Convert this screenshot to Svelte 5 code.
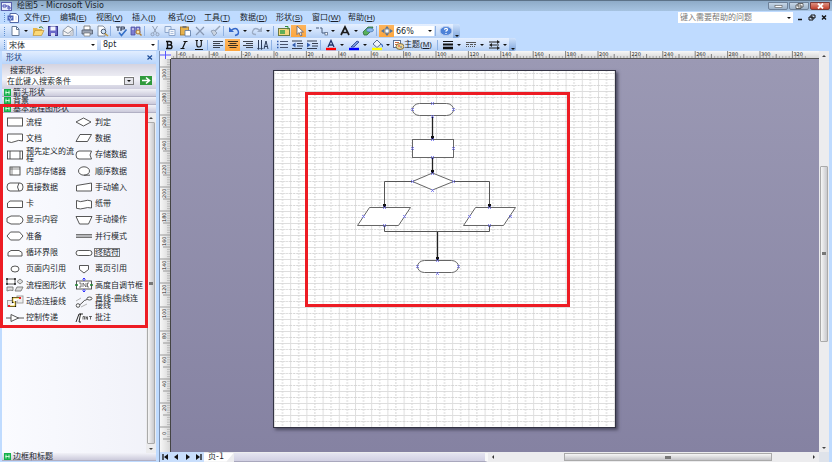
<script lang="ts">
  type Tool = { kind: 'icon' | 'caret' | 'sep'; name?: string; label?: string; active?: boolean };

  const menus = [
    ['文件', 'F'], ['编辑', 'E'], ['视图', 'V'], ['插入', 'I'], ['格式', 'O'],
    ['工具', 'T'], ['数据', 'D'], ['形状', 'S'], ['窗口', 'W'], ['帮助', 'H']
  ];

  // icons are drawn on a 14 x 12 grid
  const icons: Record<string, string> = {
    new: '<path d="M4 1.500h4.500l2.500 2.500v6.500h-7z" fill="#fff" stroke="#667a96"/><path d="M8.500 1.500v3h2.500" fill="none" stroke="#667a96"/>',
    open: '<path d="M2 3h4l1 1h4v6H2z" fill="#e8b84a"/><path d="M4 5.500h9l-2.500 5H2z" fill="#fbd978" stroke="#b98a2c" stroke-width=".6"/><path d="M8 2.500q3-2 4 1" stroke="#3a7a3a" fill="none"/>',
    save: '<rect x="2.500" y="1.500" width="9" height="9" fill="#6a68c8" stroke="#3b3a8e"/><rect x="4.500" y="1.500" width="5" height="4" fill="#f3f5ff"/><rect x="5" y="8" width="4" height="3" fill="#d8dcf0"/>',
    mail: '<path d="M2 5.500 7 1l5 3v6.500H2z" fill="#f4f4f4" stroke="#7b8695" stroke-width=".8"/><path d="M2 5.500l5 3 5-4" fill="none" stroke="#7b8695" stroke-width=".8"/><circle cx="10.500" cy="9" r="2" fill="#c9cdd6"/>',
    print: '<path d="M4 1h6v4H4z" fill="#fff" stroke="#666" stroke-width=".8"/><path d="M2 5h10.500v4H2z" fill="#9ba3b2" stroke="#505a6c" stroke-width=".8"/><path d="M4 8h6v3H4z" fill="#fff" stroke="#666" stroke-width=".6"/>',
    preview: '<path d="M3 1h5l2 2v8H3z" fill="#fff" stroke="#6b7688" stroke-width=".8"/><circle cx="8.500" cy="6.500" r="2.300" fill="#cfe4f7" stroke="#4a5870"/><path d="M10 8.500l3 2.500" stroke="#c59a3a" stroke-width="1.500"/>',
    spell: '<path d="M2 2h4M4 2v4M7 6V2h3q1 1 0 2H7" fill="none" stroke="#333d55" stroke-width="1.200"/><path d="M5 7.500l2.500 3 5-6" fill="none" stroke="#3470c8" stroke-width="1.600"/>',
    research: '<path d="M2 2h4v8H2zM7 2h4v6H7z" fill="#7e7fd0" stroke="#43459c" stroke-width=".7"/><path d="M3 4h2M8 4h2" stroke="#fff"/><circle cx="9" cy="7" r="2" fill="#f5e7b2" stroke="#b37c30"/><path d="M10.500 8.500l2 2" stroke="#b37c30" stroke-width="1.400"/>',
    cut: '<path d="M4.500 1l4 7M9.500 1l-4 7" stroke="#93a1b7" fill="none"/><circle cx="4.500" cy="9.300" r="1.500" fill="none" stroke="#93a1b7"/><circle cx="9.500" cy="9.300" r="1.500" fill="none" stroke="#93a1b7"/>',
    copy: '<path d="M2 1.500h6v6H2z" fill="#e3edfa" stroke="#8da6cc"/><path d="M6 4.500h6v6H6z" fill="#f3f7fd" stroke="#8da6cc"/><path d="M7.500 6.500h3M7.500 8.500h3" stroke="#8da6cc" stroke-width=".7"/>',
    paste: '<rect x="2.500" y="2" width="8" height="8" fill="#e7b24c" stroke="#9c6f22" stroke-width=".8"/><rect x="4.500" y="1" width="4" height="2" fill="#777"/><path d="M7 5.500h5.500v5.500H7z" fill="#fff" stroke="#5878a8" stroke-width=".8"/>',
    del: '<path d="M3 2l8 8M11 2l-8 8" stroke="#8898b2" stroke-width="1.200"/>',
    brush: '<path d="M12 1L7 6" stroke="#9aa7ba" stroke-width="1.500"/><path d="M3 6l3-1 3 3-3 3z" fill="#c9d3e0" stroke="#8796ad" stroke-width=".8"/>',
    undo: '<path d="M4 5.500q5-4 7 0t-3 5" fill="none" stroke="#3466c8" stroke-width="1.500"/><path d="M2 2v5h5z" fill="#3466c8"/>',
    redo: '<path d="M10 5.500q-5-4-7 0t3 4" fill="none" stroke="#9cacc4" stroke-width="1.300"/><path d="M12 2v5H7z" fill="#9cacc4"/>',
    shapes: '<rect x="1.500" y="3.500" width="11" height="7" fill="#f4d67e" stroke="#6a7b45"/><rect x="3" y="5" width="5" height="4" fill="#5fae58"/><path d="M8 1.500h3v3" fill="none" stroke="#2f8d3a"/>',
    pointer: '<path d="M5 1v8.500l2-2 1.500 3.500 1.500-.7L8.600 7h2.800z" fill="#fff" stroke="#57607a" stroke-width=".8"/>',
    connector: '<path d="M1 3h3M5 3h2v5h3" fill="none" stroke="#4b5e7e"/><rect x="10" y="7.500" width="2.500" height="2.500" fill="#fff" stroke="#4b5e7e" stroke-width=".7"/>',
    text: '<path d="M3 10L7 2l4 8M4.500 7.500h5" fill="none" stroke="#1c1c1c" stroke-width="1.700"/>',
    ink: '<path d="M2 7l5-5h5l-3 5-3 3H3z" fill="#58b15a" stroke="#2e6b3a" stroke-width=".8"/><ellipse cx="9" cy="5" rx="3.500" ry="2" fill="#8bb7e8" stroke="#376aa7" stroke-width=".6"/>',
    pan: '<path d="M7 1l2 2.500H5zM7 11l2-2.500H5zM1 6l3-2v4zM13 6l-3-2v4z" fill="#53749c"/><rect x="5" y="4" width="4" height="4" fill="#fff" stroke="#53749c" stroke-width=".8"/>',
    help: '<ellipse cx="7" cy="6" rx="6" ry="4.500" fill="#4e82d8" stroke="#b9cdf0"/><path d="M5.500 4.800q0-1.500 1.500-1.500t1.500 1.300q0 1-1.500 1.500v.6M7 8v1" stroke="#fff" fill="none" stroke-width="1.200"/>',
    bold: '<path d="M4 2.500h3.500q2 0 2 1.700t-2 1.800H5.500h2.500q2 0 2 1.800t-2 1.700H4M5.500 2.500v7" fill="none" stroke="#111" stroke-width="1.400"/>',
    italic: '<path d="M6.500 2.500h4M3.500 9.500h4M8.500 2.500l-3 7" fill="none" stroke="#111" stroke-width="1.200"/>',
    underline: '<path d="M3.500 1.500h2.500M8 1.500h2.500M4.800 1.500v4.500q0 2 2.200 2t2.300-2V1.500M3 10.500h8" fill="none" stroke="#111" stroke-width="1.100"/>',
    left: '<path d="M2 2.500h10M2 4.500h7M2 6.500h10M2 8.500h7" stroke="#3d434e"/>',
    center: '<path d="M2 2.500h10M3.500 4.500h7M2 6.500h10M3.500 8.500h7" stroke="#3a3020"/>',
    right: '<path d="M2 2.500h10M5 4.500h7M2 6.500h10M5 8.500h7" stroke="#3d434e"/>',
    vertical: '<path d="M2.500 1v9M5.500 1v9M8 10l2-8 2 8M8.500 7.500h3" fill="none" stroke="#2d3c59"/><path d="M1 9h3l-1.500 2zM4 9h3l-1.500 2z" fill="#2d3c59"/>',
    bullets: '<path d="M5 2.500h8M5 5.500h8M5 8.500h8" stroke="#46516a"/><path d="M2 2.500h1.500M2 5.500h1.500M2 8.500h1.500" stroke="#315cae" stroke-width="1.500"/>',
    outdent: '<path d="M2 2h10M7 4.500h6M7 7h6M2 9.500h10" stroke="#333c4e"/><path d="M5.500 3.500v5L2 6z" fill="#315cae"/>',
    indent: '<path d="M2 2h10M7 4.500h6M7 7h6M2 9.500h10" stroke="#333c4e"/><path d="M2 3.500v5L5.500 6z" fill="#315cae"/>',
    fontcolor: '<path d="M4 8L7 1.500 10 8M5 6h4" fill="none" stroke="#20356b" stroke-width="1.300"/><path d="M2 10h10" stroke="#f00" stroke-width="2.400"/>',
    linecolor: '<path d="M4 8l6-6 2 1-5 5z" fill="#7a9be0" stroke="#27408c" stroke-width=".8"/><path d="M2 10h10" stroke="#00f" stroke-width="2.400"/>',
    fill: '<path d="M3 5l4-4 4 4-4 3.500z" fill="#eef3fb" stroke="#4a5c80" stroke-width=".9"/><path d="M11 5q2 1 1.500 3" fill="none" stroke="#3b70c8" stroke-width="1.200"/><path d="M2 10h10" stroke="#ff0" stroke-width="2.400"/>',
    theme: '<rect x="1.500" y="1.500" width="7" height="7" fill="#fff" stroke="#5b7096"/><path d="M3 3.500h4M3 5.500h3" stroke="#cf6b3c"/><ellipse cx="8" cy="7.500" rx="4" ry="3" fill="#ecd28e" stroke="#6c5a33" stroke-width=".8"/><circle cx="7" cy="7" r=".8" fill="#d33"/><circle cx="9" cy="8" r=".8" fill="#36b"/>',
    weight: '<path d="M2 2.500h10" stroke="#111"/><path d="M2 5.500h10" stroke="#111" stroke-width="2"/><path d="M2 9h10" stroke="#111" stroke-width="2.600"/>',
    dash: '<path d="M2 3.500h10" stroke="#555"/><path d="M2 5.500h10" stroke="#555" stroke-dasharray="3 1"/><path d="M2 7.500h10" stroke="#555" stroke-dasharray="1 1"/>',
    ends: '<path d="M2 3h8M4 6h8M2 9h8" stroke="#222"/><path d="M10 1l3 2-3 2zM5 4l-3 2 3 2zM10 7l3 2-3 2z" fill="#222"/>'
  };

  const i = (name: string, label: string, active = false): Tool => ({ kind: 'icon', name, label, active });
  const caret: Tool = { kind: 'caret' };
  const sep: Tool = { kind: 'sep' };

  const standard: Tool[] = [
    i('new', '新建'), caret, i('open', '打开'), i('save', '保存'), i('mail', '邮件'), sep,
    i('print', '打印'), i('preview', '打印预览'), sep, i('spell', '拼写检查'), i('research', '信息检索'), sep,
    i('cut', '剪切'), i('copy', '复制'), i('paste', '粘贴'), i('del', '删除'), i('brush', '格式刷'), sep,
    i('undo', '撤消'), caret, i('redo', '恢复'), caret, sep,
    i('shapes', '形状窗口'), i('pointer', '指针工具', true), caret, i('connector', '连接线工具'), caret,
    i('text', '文本工具'), caret, i('ink', '绘图工具'), sep, i('pan', '扫视和缩放', true)
  ];

  const format: Tool[] = [
    sep, i('bold', '加粗'), i('italic', '倾斜'), i('underline', '下划线'), sep,
    i('left', '左对齐'), i('center', '居中', true), i('right', '右对齐'), i('vertical', '文字方向'), sep,
    i('bullets', '项目符号'), i('outdent', '减少缩进'), i('indent', '增加缩进'), sep,
    i('fontcolor', '字体颜色'), caret, i('linecolor', '线条颜色'), caret, i('fill', '填充颜色'), caret
  ];

  const lineTools: Tool[] = [
    sep, i('weight', '线条粗细'), caret, i('dash', '线型'), caret, i('ends', '线端'), caret
  ];

  // stencil masters, 20 x 14 grid
  const masters = [
    { name: '流程', art: '<rect x="2.500" y="3" width="15" height="8"/>' },
    { name: '判定', art: '<path d="M2 7l7.500-4L17 7l-7.500 4z"/>' },
    { name: '文档', art: '<path d="M2.500 3h15v7q-4-1.500-7.500.5t-7.500 0z"/>' },
    { name: '数据', art: '<path d="M6 3.500h11.500l-4 7H2z"/>' },
    { name: '预先定义的流程', art: '<rect x="2.500" y="3" width="15" height="8"/><path d="M5 3v8M15 3v8"/>' },
    { name: '存储数据', art: '<path d="M5 3h12.500q-3 4 0 8H5Q2 11 2 7t3-4z"/>' },
    { name: '内部存储器', art: '<rect x="5" y="3" width="10" height="8"/><path d="M7 3v8M5 5h10" stroke-width=".6"/>' },
    { name: '顺序数据', art: '<ellipse cx="10" cy="7" rx="5.500" ry="4.200"/><path d="M10 11.200h6"/>' },
    { name: '直接数据', art: '<path d="M5 3h10q3 0 3 4t-3 4H5q-3 0-3-4t3-4zM14 3q-3 4 0 8"/>' },
    { name: '手动输入', art: '<path d="M2.500 5.500L17.500 3v8h-15z"/>' },
    { name: '卡', art: '<path d="M5 4h12.500v6.500h-15V6z"/>' },
    { name: '纸带', art: '<path d="M2.500 3.500q4 2 7.500.5t7.500 0v7q-4-1-7.500.3t-7.500 0z"/>' },
    { name: '显示内容', art: '<path d="M6 3h8.500q3.500 1 3.500 4t-3.500 4H6L2 9V5z"/>' },
    { name: '手动操作', art: '<path d="M2 3.500h16L14.500 11h-9z"/>' },
    { name: '准备', art: '<path d="M2 7l3.500-4h9L18 7l-3.500 4h-9z"/>' },
    { name: '并行模式', art: '<path d="M2 5.500h16M2 7h16M2 8.500h16" stroke="#666"/>' },
    { name: '循环界限', art: '<path d="M3 10V6.500l3-2h8l3 2V10z"/>' },
    { name: '终结符', art: '<rect x="2" y="4.500" width="16" height="5" rx="2.500"/>', selected: true },
    { name: '页面内引用', art: '<ellipse cx="10" cy="7" rx="4" ry="3"/>' },
    { name: '离页引用', art: '<path d="M5.500 3.500h9V7.500L10 11 5.500 7.500z"/>' },
    { name: '流程图形状', art: '<rect x="2" y="1" width="8" height="5"/><path d="M1 1h2M9 1h2M1 6h2M9 6h2" stroke="#222" stroke-width="1.600"/><path d="M12 3.500L15 1l3 2.500L15 6zM2 9h6v3.500q-3-1-6 .5zM12 9h6l-2 4h-6z" fill="#ddd" stroke="#777"/>' },
    { name: '高度自调节框', art: '<rect x="2.500" y="3" width="15" height="8"/><path d="M5 5h2v4H5M9 9V5l3 4V5M15 5h-1.500v4H15" stroke-width=".7"/><path d="M10 0v3M10 11v3M8.500 1.500L10 0l1.500 1.500M8.500 12.500L10 14l1.500-1.500" stroke="#22f"/><path d="M1 7h3M16 7h3" stroke="#283" stroke-width="1.500"/>' },
    { name: '动态连接线', art: '<rect x="2.500" y="5.500" width="5" height="6" fill="#eee" stroke="#999"/><rect x="12" y="1" width="6" height="7" fill="#eee" stroke="#999"/><path d="M4 11h6V7H8V3h7" stroke="#111" stroke-width="2.200"/><path d="M4 11h6V7H8V3h7" stroke="#ec3"/><path d="M3 11h2M14 3h2" stroke="#e22" stroke-width="2"/>' },
    { name: '直线-曲线连接线', art: '<path d="M5 10.500L9 7q1-2 3-2l3-2"/><circle cx="4" cy="10.500" r="1.800"/><ellipse cx="15.500" cy="3.500" rx="2.500" ry="1.500"/><path d="M2 6l5-3M7 12l6-3" stroke="#aaa"/>' },
    { name: '控制传递', art: '<path d="M1 7h5M13 7h6M6 3.500v7L13.500 7z"/>' },
    { name: '批注', art: '<path d="M7 3H5L2 11M9 3H6.500L5 11h2" stroke="#111"/><path d="M9 8.500V5.500h1.500v3M12 8.500v-3l1.500 3v-3M15 5.500h3M16.500 5.500v3" stroke-width=".8"/>' }
  ];

  const hTicks = Array.from({ length: 223 }, (_, n) => n * 2 - 64).filter((v) => v <= 328);
  const vTicks = Array.from({ length: 160 }, (_, n) => 306 - n * 2);

  // connection points on the drawing page
  const points = [
    [158, 32], [138, 38], [179, 38], [158, 45],
    [158, 68], [138, 77], [179, 77], [158, 86],
    [158, 102], [138, 110], [179, 110], [158, 119],
    [110, 136], [89, 145], [130, 145], [110, 154],
    [215, 136], [195, 145], [236, 145], [215, 154],
    [163, 189], [143, 195], [184, 195], [163, 202]
  ];

  let fontName = $state('宋体');
  let fontSize = $state('8pt');
  let zoom = $state('66%');
  let query = $state('在此键入搜索条件');
</script>

{#snippet tools(list: Tool[])}
  {#each list as t}
    {#if t.kind === 'sep'}
      <span class="sep"></span>
    {:else if t.kind === 'caret'}
      <button class="caret" aria-label="更多"></button>
    {:else}
      <button class="tool" class:active={t.active} aria-label={t.label}>
        <svg width="14" height="12" viewBox="0 0 14 12">{@html icons[t.name ?? '']}</svg>
      </button>
    {/if}
  {/each}
{/snippet}

{#snippet stencil(title: string)}
  <button class="stencil">
    <svg width="7" height="7" viewBox="0 0 7 7"><rect width="7" height="7" fill="#14b04a" /><path d="M2 1.500v4M5 1.500v4M1.500 3.500h4" stroke="#d8ffe0" stroke-width=".9" /></svg>
    {title}
  </button>
{/snippet}

<div class="app">
  <header class="titlebar">
    <svg width="11" height="9" viewBox="0 0 11 9"><rect x=".5" y=".5" width="10" height="8" fill="#e8ecfa" stroke="#5960ad" /><path d="M2 3h3v2H2zM7 5h2v2H7zM5 4h3v1" fill="none" stroke="#4c55b5" /></svg>
    <span class="title">绘图5 - Microsoft Visio</span>
    <div class="winbtns">
      <button aria-label="最小化"><svg width="9" height="6" viewBox="0 0 9 6"><rect x="1" y="2.500" width="7" height="2" fill="#fff" stroke="#555" stroke-width=".6" /></svg></button>
      <button aria-label="还原"><svg width="9" height="6" viewBox="0 0 9 6"><path d="M3 .5h5v3.500H3zM1 2h5v3.500H1z" fill="#fff" stroke="#444" stroke-width=".8" /></svg></button>
      <button class="close" aria-label="关闭"><svg width="9" height="6" viewBox="0 0 9 6"><path d="M2 .5l5 5M7 .5l-5 5" stroke="#fff" stroke-width="1.800" /></svg></button>
    </div>
  </header>

  <nav class="menubar">
    <span class="grip"></span>
    <svg class="docicon" width="12" height="10" viewBox="0 0 12 10"><path d="M3 .5h6l2.500 2v7H3z" fill="#fff" stroke="#5267a5" /><rect x=".5" y="2.500" width="6" height="5" fill="#4a62b8" /><path d="M2 4l1.500 2.500L5 4M8 4h2M8 6h2" fill="none" stroke="#c6d2f5" stroke-width=".9" /></svg>
    {#each menus as [name, key]}
      <button class="menu">{name}(<u>{key}</u>)</button>
    {/each}
    <div class="ask">
      <input aria-label="帮助" placeholder="键入需要帮助的问题" />
      <button class="caret" aria-label="更多"></button>
    </div>
    <div class="docbtns">
      <button aria-label="最小化窗口"><svg width="8" height="7" viewBox="0 0 8 7"><path d="M2 5.500h4" stroke="#111" stroke-width="1.500" /></svg></button>
      <button aria-label="还原窗口"><svg width="8" height="7" viewBox="0 0 8 7"><path d="M3 1h4v3H3zM1 3h4v3H1z" fill="#cfe0f8" stroke="#111" /></svg></button>
      <button aria-label="关闭窗口"><svg width="8" height="7" viewBox="0 0 8 7"><path d="M2 1.500l4 4M6 1.500l-4 4" stroke="#111" stroke-width="1.400" /></svg></button>
    </div>
  </nav>

  <div class="toolrow">
    <div class="toolbar">
      <span class="grip"></span>
      {@render tools(standard)}
      <div class="combo zoom">
        <input aria-label="显示比例" bind:value={zoom} />
        <button class="caret" aria-label="更多"></button>
      </div>
      {@render tools([sep, i('help', '帮助')])}
      <button class="end" aria-label="工具栏选项"></button>
    </div>
  </div>

  <div class="toolrow">
    <div class="toolbar">
      <span class="grip"></span>
      <div class="combo font">
        <input aria-label="字体" bind:value={fontName} />
        <button class="caret" aria-label="更多"></button>
      </div>
      <div class="combo size">
        <input aria-label="字号" bind:value={fontSize} />
        <button class="caret" aria-label="更多"></button>
      </div>
      {@render tools(format)}
      <button class="theme">
        <svg width="12" height="12" viewBox="0 0 12 12">{@html icons.theme}</svg>主题(<u>M</u>)
      </button>
      {@render tools(lineTools)}
      <button class="end" aria-label="工具栏选项"></button>
    </div>
  </div>

  <main>
    <aside>
      <div class="panelhead">
        <span>形状</span>
        <button aria-label="关闭形状窗口"><svg width="8" height="7" viewBox="0 0 8 7"><path d="M1.500 1.500l4.500 4M6 1.500l-4.500 4" stroke="#1d4c96" stroke-width="1.200" /></svg></button>
      </div>
      <div class="search">
        <label for="q">搜索形状:</label>
        <div class="searchrow">
          <div class="combo">
            <input id="q" bind:value={query} />
            <button class="caret boxed" aria-label="更多"></button>
          </div>
          <button class="go" aria-label="搜索"><svg width="12" height="9" viewBox="0 0 12 9"><path d="M2 4.500h7M6 1.500l3.500 3L6 7.500" fill="none" stroke="#fff" stroke-width="1.600" /></svg></button>
        </div>
      </div>
      {@render stencil('箭头形状')}
      {@render stencil('背景')}
      {@render stencil('基本流程图形状')}
      <div class="body">
        <div class="masters">
          {#each masters as m}
            <div class="master">
              <svg width="20" height="14" viewBox="0 0 20 14" fill="#fff" stroke="#444" stroke-width=".9">{@html m.art}</svg>
              <span class:selected={m.selected}>{m.name}</span>
            </div>
          {/each}
        </div>
        <div class="vscroll slim">
          <span class="arrow up"></span>
          <span class="thumb full"></span>
          <span class="arrow down"></span>
        </div>
      </div>
      {@render stencil('边框和标题')}
      <div class="mark"></div>
    </aside>

    <section class="view">
      <div class="corner"><svg width="11" height="8" viewBox="0 0 11 8"><path d="M5.500 0v8M0 4h11" stroke="#55f" /></svg></div>
      <div class="hruler">
        <svg width="100%" height="8">
          {#each hTicks as v}
            {@const x = 103 + v * 1.62}
            <path d="M{x} {v % 20 === 0 ? 0 : v % 10 === 0 ? 3 : 5}V8" stroke={v % 10 === 0 ? '#666' : '#999'} stroke-width=".8" />
            {#if v % 20 === 0}<text x={x + 1} y="5">{v}</text>{/if}
          {/each}
        </svg>
      </div>
      <div class="vruler">
        <svg width="11" height="100%">
          {#each vTicks as v}
            {@const y = 368 - v * 1.2}
            <path d="M{v % 20 === 0 ? 0 : v % 10 === 0 ? 3 : 7} {y}H11" stroke={v % 10 === 0 ? '#777' : '#aaa'} stroke-width=".7" />
            {#if v % 20 === 0 && v >= 0}<text transform="translate(6 {y + (v < 100 ? 8 : 11)}) rotate(-90)">{v}</text>{/if}
          {/each}
        </svg>
      </div>

      <div class="canvas">
        <svg class="page" width="341" height="356" viewBox="0 0 341 356">
          <defs>
            <pattern id="grid" width="16.2" height="12" patternUnits="userSpaceOnUse" y="-4">
              <path d="M.5 0v12M0 .5h16.200" stroke="#dedede" />
              <path d="M8.500 0v12" stroke="#d6d6d6" stroke-dasharray="2 1" />
              <path d="M0 6.500h16.200" stroke="#d6d6d6" stroke-dasharray="2 1" />
            </pattern>
          </defs>
          <rect width="341" height="356" fill="#fff" />
          <rect width="341" height="356" fill="url(#grid)" />
          <g fill="none" stroke="#555">
            <path d="M158.500 45v20M158.500 86v13M163.500 160v26" stroke="#222" stroke-width="1.300" />
            <path d="M138 110.500H110.500V134M179 110.500H215.500V134M110.500 154V160.500H215.500V154" />
          </g>
          <g fill="#fff" stroke="#666">
            <rect x="138.500" y="32.500" width="41" height="12" rx="7" />
            <rect x="138.500" y="68.500" width="41" height="18" />
            <path d="M138.500 110.500l20-8.500 21 8.500-21 8.500z" />
            <path d="M95.500 136.500h41l-12 18h-41z" />
            <path d="M201.500 136.500h40l-12 18h-40z" />
            <rect x="143.500" y="189.500" width="41" height="12" rx="7" />
          </g>
          <path d="M157 65h3v3h-3zM157 99h3v3h-3zM109 133h3v3h-3zM214 133h3v3h-3zM162 186h3v3h-3z" fill="#111" />
          {#each points as [x, y]}
            <path d="M{x - 1} {y - 1}l3 3m0-3l-3 3" stroke="#6c6cf0" stroke-width=".8" />
          {/each}
          <rect x="32.500" y="22.500" width="262" height="212" fill="none" stroke="#ed1c24" stroke-width="3" />
        </svg>
      </div>

      <div class="vscroll">
        <span class="arrow up"></span>
        <span class="track"></span>
        <span class="thumb mid"></span>
        <span class="track low"></span>
        <span class="arrow down"></span>
      </div>

      <footer class="tabs">
        <div class="pager">
          <button aria-label="首页"><svg width="11" height="8" viewBox="0 0 11 8"><path d="M3 1v6" stroke="#111" stroke-width="1.300" /><path d="M8 1v6L4 4z" fill="#111" /></svg></button>
          <button aria-label="上一页"><svg width="11" height="8" viewBox="0 0 11 8"><path d="M7 1v6L3 4z" fill="#111" /></svg></button>
          <button aria-label="下一页"><svg width="11" height="8" viewBox="0 0 11 8"><path d="M4 1v6l4-3z" fill="#111" /></svg></button>
          <button aria-label="末页"><svg width="11" height="8" viewBox="0 0 11 8"><path d="M8 1v6" stroke="#111" stroke-width="1.300" /><path d="M3 1v6l4-3z" fill="#111" /></svg></button>
        </div>
        <button class="tab">页-1</button>
        <span class="tabfill"></span>
        <div class="hscroll">
          <span class="arrow lft"></span>
          <span class="gap"></span>
          <span class="hthumb"></span>
          <span class="gap small"></span>
          <span class="arrow rgt"></span>
        </div>
        <span class="sizer"></span>
      </footer>
    </section>
  </main>
</div>

<style>
  :global(body) {
    margin: 0;
    overflow: hidden;
  }

  .app {
    height: 100vh;
    display: flex;
    flex-direction: column;
    background: #bfdbff;
    font-family: "DejaVu Sans", "Noto Sans CJK SC", sans-serif;
    font-size: 8px;
    line-height: 10px;
    color: #1a1f2b;
  }

  button {
    font: inherit;
    color: inherit;
    background: none;
    border: 0;
    padding: 0;
    margin: 0;
    display: flex;
    align-items: center;
    justify-content: center;
    white-space: nowrap;
    flex: none;
  }

  input {
    font: inherit;
    color: inherit;
    border: 0;
    padding: 0 0 0 2px;
    margin: 0;
    min-width: 0;
    flex: 1;
    background: #fff;
    height: 100%;
    box-sizing: border-box;
    outline: none;
  }

  svg {
    display: block;
    flex: none;
  }

  .titlebar {
    height: 11px;
    box-sizing: border-box;
    border-top: 1px solid #5c7288;
    background: linear-gradient(#8eabc8, #a6c3e1);
    display: flex;
    align-items: center;
    gap: 5px;
    padding: 0 2px 0 1px;
  }

  .title {
    flex: 1;
  }

  .winbtns {
    display: flex;
    gap: 1px;
  }

  .winbtns button {
    width: 20px;
    height: 8px;
    border: 1px solid #6d8199;
    background: linear-gradient(#c6d6e6, #9cb2c9);
    box-sizing: border-box;
    border-radius: 0 0 2px 2px;
  }

  .winbtns .close {
    background: linear-gradient(#de9080, #c2402c);
    border-color: #7b3b38;
  }

  .menubar {
    height: 13px;
    display: flex;
    align-items: center;
  }

  .grip {
    width: 2px;
    height: 9px;
    margin: 0 0 0 4px;
    border-left: 1px dotted #5f8fd0;
    box-sizing: border-box;
    flex: none;
  }

  .docicon {
    margin: 0 5px 0 1px;
  }

  .menu {
    width: 36px;
    justify-content: flex-start;
    font-family: "Liberation Sans", "Noto Sans CJK SC", sans-serif;
  }

  .ask {
    margin-left: auto;
    width: 115px;
    height: 11px;
    background: #fff;
    display: flex;
    align-items: center;
  }

  .ask input::placeholder {
    color: #777;
    opacity: 1;
  }

  .docbtns {
    display: flex;
    gap: 4px;
    margin: 0 4px 0 3px;
  }

  .toolrow {
    height: 14px;
    display: flex;
  }

  .toolrow + .toolrow {
    height: 13px;
  }

  .toolbar {
    display: flex;
    align-items: center;
    background: linear-gradient(#e6f0ff, #cfe1fb 50%, #b3cff5);
    border-radius: 0 3px 3px 0;
  }

  .toolbar .grip {
    margin-right: 1px;
  }

  .tool {
    width: 15px;
    height: 12px;
  }

  .tool.active {
    background: linear-gradient(#fdb45c, #fda63e);
  }

  .caret {
    width: 8px;
    height: 8px;
  }

  .caret::after {
    content: "";
    border: 2px solid transparent;
    border-top-color: #111;
    border-bottom: 0;
  }

  .sep {
    width: 4px;
    height: 10px;
    background: linear-gradient(#8fb2e4, #8fb2e4) 1px 0 / 1px 100% no-repeat;
  }

  .combo {
    height: 10px;
    background: #fff;
    display: flex;
    align-items: center;
  }

  .font {
    width: 90px;
    margin-right: 4px;
  }

  .size {
    width: 56px;
  }

  .zoom {
    width: 40px;
  }

  .end {
    width: 7px;
    height: 100%;
    align-items: flex-end;
    padding-bottom: 1px;
    box-sizing: border-box;
    background: linear-gradient(#cfe2fc, #7fa6dc);
    border-radius: 0 3px 3px 0;
  }

  .end::after {
    content: "";
    border: 2px solid transparent;
    border-top-color: #111;
    border-bottom: 0;
  }

  .theme {
    width: 44px;
    justify-content: flex-start;
    font-family: "Liberation Sans", "Noto Sans CJK SC", sans-serif;
  }

  main {
    flex: 1;
    min-height: 0;
    display: flex;
  }

  aside {
    width: 154px;
    margin: 0 3px 1px 2px;
    flex: none;
    display: flex;
    flex-direction: column;
    position: relative;
  }

  .panelhead {
    height: 13px;
    padding: 0 2px 0 4px;
    display: flex;
    align-items: center;
    justify-content: space-between;
    background: linear-gradient(#e2eeff, #b9d5fb);
    color: #1b4480;
  }

  .search {
    height: 25px;
    padding: 2px 4px 0 5px;
    box-sizing: border-box;
    background: linear-gradient(#d4d3e0, #f2f2f8 60%, #cfcede);
  }

  .search label {
    display: block;
    padding-left: 3px;
    line-height: 10px;
  }

  .searchrow {
    display: flex;
    justify-content: space-between;
  }

  .searchrow .combo {
    width: 127px;
    height: 9px;
  }

  .searchrow input {
    padding-left: 0;
  }

  .boxed {
    width: 10px;
    height: 8px;
    background: #e4e4ea;
    border: 1px solid #777;
    box-sizing: border-box;
  }

  .go {
    width: 12px;
    height: 9px;
    background: #2f9a3c;
  }

  .stencil {
    height: 8px;
    line-height: 8px;
    justify-content: flex-start;
    gap: 2px;
    padding-left: 2px;
    background: linear-gradient(#f2f2f8, #cbcadb);
    border-bottom: 1px solid #b1b0c4;
    box-sizing: border-box;
  }

  .body {
    flex: 1;
    min-height: 0;
    display: flex;
    background: linear-gradient(90deg, #fafbff, #f1f2f9);
  }

  .masters {
    flex: 1;
    height: 212px;
    padding: 1px 0 0 3px;
    display: grid;
    grid-template-columns: 69px 1fr;
    grid-template-rows: repeat(13, 1fr);
  }

  .master {
    display: flex;
    align-items: center;
    gap: 1px;
    min-width: 0;
    min-height: 0;
    line-height: 7px;
  }

  .master span {
    max-width: 48px;
    line-break: anywhere;
  }

  .master .selected {
    outline: 1px solid #777;
  }

  .mark {
    position: absolute;
    left: -2px;
    top: 53px;
    width: 142px;
    height: 218px;
    border: 3px solid #ed1c24;
  }

  .view {
    flex: 1;
    min-width: 0;
    display: grid;
    grid-template-columns: 11px minmax(0, 1fr) 10px;
    grid-template-rows: 8px minmax(0, 1fr) 10px;
    margin-right: 3px;
    border-left: 1px solid #7b8fae;
    box-sizing: border-box;
  }

  .corner {
    background: #f2f2f5;
  }

  .hruler {
    background: linear-gradient(#f7f7f7, #d8d8d8);
    border-bottom: 1px solid #555;
    box-sizing: border-box;
    overflow: hidden;
  }

  .vruler {
    grid-row: 2;
    background: linear-gradient(90deg, #f7f7f7, #d8d8d8);
    border-right: 1px solid #444;
    box-sizing: border-box;
    overflow: hidden;
  }

  .hruler text,
  .vruler text {
    font-size: 5px;
    fill: #222;
  }

  .canvas {
    grid-row: 2;
    overflow: hidden;
    padding: 12px 0 0 103px;
    background: linear-gradient(#9b99b4, #8582a2);
  }

  .page {
    outline: 1px solid #333344;
    box-shadow: 2px 2px 3px 1px #4b4a60;
  }

  .vscroll {
    grid-column: 3;
    grid-row: 1 / 3;
    display: flex;
    flex-direction: column;
    align-items: center;
    background: #ececee;
  }

  .slim {
    width: 10px;
    flex: none;
  }

  .arrow {
    width: 10px;
    height: 9px;
    flex: none;
    display: flex;
    align-items: center;
    justify-content: center;
  }

  .arrow::after {
    content: "";
    border: 2px solid transparent;
  }

  .up::after {
    border-bottom-color: #444;
    border-top: 0;
  }

  .down::after {
    border-top-color: #444;
    border-bottom: 0;
  }

  .lft::after {
    border-right-color: #333;
    border-left: 0;
  }

  .rgt::after {
    border-left-color: #333;
    border-right: 0;
  }

  .thumb {
    width: 8px;
    border: 1px solid #aaa;
    border-radius: 1px;
    box-sizing: border-box;
    background:
      linear-gradient(#777, #777) center / 4px 3px no-repeat,
      linear-gradient(90deg, #f6f6f6, #c9c9cd);
  }

  .full {
    flex: 1;
  }

  .track {
    flex: 107;
  }

  .mid {
    flex: 175;
  }

  .low {
    flex: 102;
  }

  .tabs {
    grid-row: 3;
    grid-column: 1 / 4;
    display: flex;
    align-items: center;
    min-width: 0;
    background: #ececee;
  }

  .pager {
    display: flex;
    height: 100%;
    background: #c8defc;
  }

  .tab {
    width: 30px;
    height: 9px;
    padding-right: 6px;
    background: #fff;
    clip-path: polygon(0 0, 100% 0, 75% 100%, 0 100%);
  }

  .tabfill {
    flex: 250;
    height: 9px;
    background: linear-gradient(#e4e4f0, #d0cfe2);
    border-right: 3px solid #f8f8f8;
    border-bottom: 1px solid #a9a8bd;
    box-sizing: border-box;
  }

  .hscroll {
    flex: 330;
    height: 100%;
    display: flex;
    align-items: center;
  }

  .gap {
    flex: 66;
  }

  .small {
    flex: 37;
  }

  .hthumb {
    flex: 206;
    height: 8px;
    border: 1px solid #aaa;
    box-sizing: border-box;
    background:
      linear-gradient(#777, #777) center / 6px 3px no-repeat,
      linear-gradient(#f6f6f6, #c4c4c8);
  }

  .sizer {
    width: 10px;
    height: 100%;
    background: #dfe3ea;
  }
</style>
